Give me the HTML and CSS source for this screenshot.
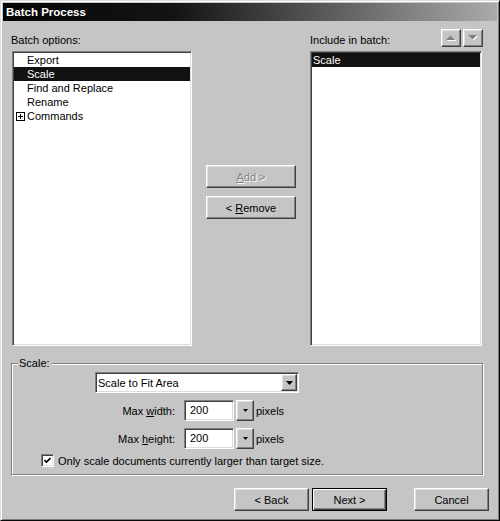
FILE: index.html
```html
<!DOCTYPE html>
<html>
<head>
<meta charset="utf-8">
<title>Batch Process</title>
<link rel="stylesheet" href="styles.css">
</head>
<body>
<div class="window">
  <div class="titlebar">Batch Process</div>
  <div class="main">
    <div class="head-label left-label">Batch options:</div>
    <div></div>
    <div class="right-head">
      <span class="head-label">Include in batch:</span>
      <div class="arrows">
        <div class="btn arrow-btn">
          <svg width="10" height="6" viewBox="0 0 10 6"><polygon points="1,6 10,6 5.5,1.5" fill="#fff"/><polygon points="0,5 9,5 4.5,0.5" fill="#808080"/></svg>
        </div>
        <div class="btn arrow-btn">
          <svg width="10" height="6" viewBox="0 0 10 6"><polygon points="1,1 10,1 5.5,5.5" fill="#fff"/><polygon points="0,0 9,0 4.5,4.5" fill="#808080"/></svg>
        </div>
      </div>
    </div>
    <ul class="listbox left-list">
      <li>Export</li>
      <li class="sel">Scale</li>
      <li>Find and Replace</li>
      <li>Rename</li>
      <li class="tree"><svg class="plus" width="9" height="9" viewBox="0 0 9 9"><rect x="0.5" y="0.5" width="8" height="8" fill="#fff" stroke="#000"/><path d="M2 4.5h5M4.5 2v5" stroke="#000"/></svg><span>Commands</span></li>
    </ul>
    <div class="mid">
      <div class="btn wide disabled"><span><u>A</u>dd &gt;</span></div>
      <div class="btn wide"><span>&lt; <u>R</u>emove</span></div>
    </div>
    <ul class="listbox right-list">
      <li class="sel">Scale</li>
    </ul>
  </div>

  <div class="group">
    <div class="legend">Scale:</div>
    <div class="combo">
      <span class="combo-text">Scale to Fit Area</span>
      <div class="btn drop">
        <svg width="7" height="4" viewBox="0 0 7 4"><polygon points="0,0 7,0 3.5,4" fill="#000"/></svg>
      </div>
    </div>
    <div class="field-row">
      <span class="field-label">Max <u>w</u>idth:</span>
      <div class="input">200</div>
      <div class="btn spin">
        <svg width="5" height="3" viewBox="0 0 5 3"><polygon points="0,0 5,0 2.5,3" fill="#000"/></svg>
      </div>
      <span class="unit">pixels</span>
    </div>
    <div class="field-row">
      <span class="field-label">Max <u>h</u>eight:</span>
      <div class="input">200</div>
      <div class="btn spin">
        <svg width="5" height="3" viewBox="0 0 5 3"><polygon points="0,0 5,0 2.5,3" fill="#000"/></svg>
      </div>
      <span class="unit">pixels</span>
    </div>
    <div class="check-row">
      <div class="checkbox">
        <svg width="7" height="7" viewBox="0 0 7 7"><polyline points="0.5,3 2.5,5 6.5,1" fill="none" stroke="#000" stroke-width="1.7"/></svg>
      </div>
      <span>Only scale documents currently larger than target size.</span>
    </div>
  </div>

  <div class="footer">
    <div class="btn foot"><span>&lt; Back</span></div>
    <div class="btn foot default"><span>Next &gt;</span></div>
    <div class="btn foot cancel"><span>Cancel</span></div>
  </div>
</div>
</body>
</html>
```

FILE: styles.css
```css
html, body {
  margin: 0;
  padding: 0;
  background: #c5c5c5;
}

body {
  font-family: "Liberation Sans", Arial, sans-serif;
  font-size: 11px;
  color: #000;
}

.window {
  width: 500px;
  height: 521px;
  box-sizing: border-box;
  background: #c5c5c5;
  border: 1px solid;
  border-color: #dcdcdc #0a0a0a #0a0a0a #dcdcdc;
  box-shadow: inset 1px 1px 0 #fff, inset -1px -1px 0 #7c7c7c;
  padding: 2px;
}

.titlebar {
  height: 18px;
  background: linear-gradient(90deg, #060606 0%, #141414 35%, #aaaaaa 100%);
  color: #fff;
  font-weight: bold;
  font-size: 11.5px;
  line-height: 18px;
  padding-left: 3px;
}

.main {
  display: grid;
  grid-template-columns: 180px 118px 172px;
  grid-template-rows: 30px 295px;
  margin-left: 9px;
}

.head-label {
  line-height: 14px;
}

.left-label {
  align-self: end;
  padding-bottom: 4px;
  margin-left: -1px;
}

.right-head {
  display: flex;
  justify-content: space-between;
  align-items: flex-end;
  padding-bottom: 4px;
  margin-right: -1px;
}

.arrows {
  display: flex;
  gap: 2px;
}

.btn {
  box-sizing: border-box;
  border: 1px solid;
  border-color: #fff #404040 #404040 #fff;
  box-shadow: inset -1px -1px 0 #808080, inset 1px 1px 0 #dfdfdf;
  background: #c5c5c5;
  display: flex;
  align-items: center;
  justify-content: center;
  white-space: pre;
}

.arrow-btn {
  width: 20px;
  height: 18px;
}

.listbox {
  list-style: none;
  margin: 0;
  padding: 1px;
  box-sizing: border-box;
  background: #fff;
  border: 1px solid;
  border-color: #808080 #fff #fff #808080;
  box-shadow: inset 1px 1px 0 #404040, inset -1px -1px 0 #dcdcdc;
}

.listbox li {
  height: 14px;
  line-height: 14px;
  white-space: nowrap;
}

.left-list li {
  padding-left: 13px;
}

.left-list li.tree {
  padding-left: 2px;
  display: flex;
  align-items: center;
}

.plus {
  margin-right: 2px;
  flex: none;
}

.right-list li {
  padding-left: 1px;
}

.listbox li.sel {
  background: #111;
  color: #fff;
}

.mid {
  padding: 114px 0 0 14px;
  display: flex;
  flex-direction: column;
  gap: 8px;
}

.wide {
  width: 90px;
  height: 23px;
}

.disabled {
  color: #808080;
  text-shadow: 1px 1px 0 #fff;
}

.group {
  margin: 17px 0 0 8px;
  width: 472px;
  height: 112px;
  box-sizing: border-box;
  border: 1px solid #808080;
  box-shadow: inset 1px 1px 0 #fff, 1px 1px 0 #fff;
}

.legend {
  width: fit-content;
  margin: -7px 0 0 6px;
  padding: 0 2px 0 1px;
  background: #c5c5c5;
  line-height: 13px;
}

.combo {
  margin: 2px 0 0 83px;
  width: 204px;
  height: 21px;
  box-sizing: border-box;
  background: #fff;
  border: 1px solid;
  border-color: #808080 #fff #fff #808080;
  box-shadow: inset 1px 1px 0 #404040, inset -1px -1px 0 #dcdcdc;
  padding: 1px 1px 1px 2px;
  display: flex;
  align-items: center;
}

.combo-text {
  flex: 1;
}

.drop {
  width: 16px;
  height: 17px;
}

.field-row {
  display: flex;
  align-items: center;
  height: 21px;
  margin-top: 7px;
}

.field-label {
  width: 163px;
  margin-right: 9px;
  text-align: right;
}

.input {
  width: 50px;
  height: 21px;
  box-sizing: border-box;
  background: #fff;
  border: 1px solid;
  border-color: #808080 #fff #fff #808080;
  box-shadow: inset 1px 1px 0 #404040, inset -1px -1px 0 #dcdcdc;
  padding-left: 5px;
  line-height: 19px;
}

.spin {
  width: 18px;
  height: 21px;
  margin-left: 2px;
}

.unit {
  margin-left: 2px;
}

.check-row {
  display: flex;
  align-items: center;
  margin: 5px 0 0 29px;
  height: 13px;
}

.checkbox {
  width: 13px;
  height: 13px;
  box-sizing: border-box;
  background: #fff;
  border: 1px solid;
  border-color: #808080 #fff #fff #808080;
  box-shadow: inset 1px 1px 0 #404040, inset -1px -1px 0 #dcdcdc;
  display: flex;
  align-items: center;
  justify-content: center;
  margin-right: 4px;
}

.footer {
  display: flex;
  justify-content: flex-end;
  margin-top: 13px;
  padding-right: 8px;
}

.foot {
  width: 75px;
  height: 23px;
  margin-left: 3px;
}

.foot.cancel {
  margin-left: 27px;
}

.foot.default {
  border: 1px solid #000;
  box-shadow: inset 1px 1px 0 #fff, inset -1px -1px 0 #404040, inset -2px -2px 0 #808080;
}
```
